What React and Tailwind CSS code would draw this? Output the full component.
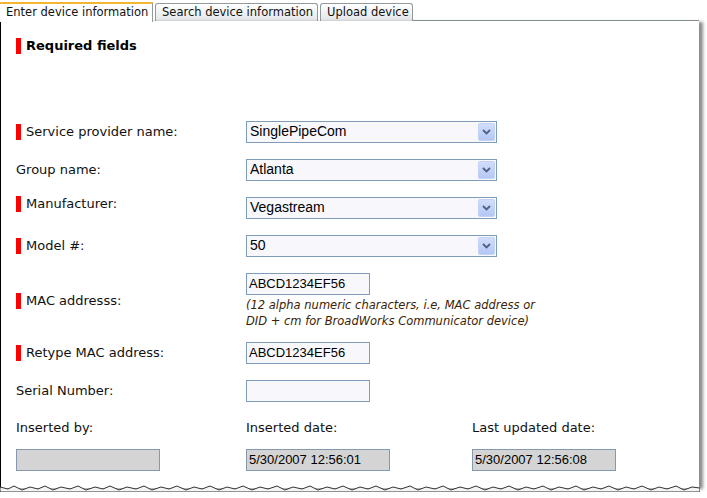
import React from "react"

const TABS = [
  { label: "Enter device information", active: true, w: "w-[153px]" },
  { label: "Search device information", active: false, w: "w-[163px]" },
  { label: "Upload device", active: false, w: "w-[93px]" },
]

function RedBar() {
  return <span className="inline-block w-[5px] h-[16px] bg-[#ff0000] mr-[5px] shrink-0" />
}

function Select({ value }) {
  return (
    <div className="w-[251px] h-[22px] border border-[#7f9db9] bg-[#f7f7fc] flex items-center justify-between pl-[3px] pr-[1px]">
      <span className="text-[14px] text-black" style={{ fontFamily: '"Liberation Sans", Arial, sans-serif' }}>{value}</span>
      <span className="w-[17px] h-[18px] rounded-[2px] bg-gradient-to-b from-[#d2ddfb] to-[#b4c7f5] border border-[#c3d2f7] flex items-center justify-center">
        <svg width="9" height="6" viewBox="0 0 9 6">
          <path d="M1 1 L4.5 4.5 L8 1" fill="none" stroke="#4d6185" strokeWidth="1.8" />
        </svg>
      </span>
    </div>
  )
}

function TextBox({ value = "", gray = false, w = "w-[124px]" }) {
  return (
    <div
      className={`${w} h-[22px] border ${gray ? "bg-[#d4d4d4] border-[#8499b0]" : "bg-[#f8f8fc] border-[#7f9db9]"} flex items-center pl-[2px] text-[13px] text-black`}
      style={{ fontFamily: '"Liberation Sans", Arial, sans-serif' }}
    >
      {value}
    </div>
  )
}

function Row({ label, required, children, className = "", labelClass = "" }) {
  return (
    <div className={`flex items-center ${className}`}>
      <div className={`w-[230px] flex items-center text-[13px] text-[#111] ${labelClass}`}>
        {required && <RedBar />}
        <span>{label}</span>
      </div>
      {children}
    </div>
  )
}

export default function App() {
  return (
    <div className="w-[707px] h-[498px] bg-white relative overflow-hidden" style={{ fontFamily: '"DejaVu Sans", Verdana, sans-serif' }}>
      {/* Tabs */}
      <div className="flex items-end h-[21px] w-[699px]">
        {TABS.map((t, i) =>
          t.active ? (
            <div key={i} className={`${t.w} h-[20px] border-t-2 border-[#f2b630] border-r border-r-[#919b9c] bg-white text-[11.5px] text-[#111] pl-[6px] leading-[17px] whitespace-nowrap -mb-px relative z-10`}>
              {t.label}
            </div>
          ) : (
            <div key={i} className={`${t.w} ml-[2px] h-[18px] border border-b-0 border-[#919b9c] rounded-t-[3px] bg-gradient-to-b from-white to-[#e3e5e8] text-[11.5px] text-[#111] pl-[6px] leading-[17px] whitespace-nowrap`}>
              {t.label}
            </div>
          )
        )}
        <div className="flex-1 border-b border-[#919b9c]" />
      </div>

      {/* Panel */}
      <div className="relative w-[699px] h-[467px] border-l border-black bg-white shadow-[4px_1px_3px_rgba(0,0,0,0.45)] pl-[15px]">
        <div className="flex items-center pt-[15px]">
          <RedBar />
          <span className="text-[13px] font-bold text-black">Required fields</span>
        </div>

        <div className="mt-[65px] flex flex-col">
          <Row label="Service provider name:" required>
            <Select value="SinglePipeCom" />
          </Row>
          <Row label="Group name:" className="mt-[16px]">
            <Select value="Atlanta" />
          </Row>
          <Row label="Manufacturer:" required className="mt-[16px]" labelClass="-mt-[7px]">
            <Select value="Vegastream" />
          </Row>
          <Row label="Model #:" required className="mt-[16px]">
            <Select value="50" />
          </Row>
          <Row label="MAC addresss:" required className="mt-[16px]">
            <div className="flex flex-col">
              <TextBox value="ABCD1234EF56" />
              <div className="mt-[2px] text-[11.5px] italic leading-[16px] text-[#3a2306]">
                (12 alpha numeric characters, i.e, MAC address or
                <br />
                DID + cm for BroadWorks Communicator device)
              </div>
            </div>
          </Row>
          <Row label="Retype MAC address:" required className="mt-[13px]">
            <TextBox value="ABCD1234EF56" />
          </Row>
          <Row label="Serial Number:" className="mt-[16px]">
            <TextBox />
          </Row>

          <div className="grid grid-cols-[230px_226px_200px] mt-[16px] text-[13px] text-[#111]">
            <div>Inserted by:</div>
            <div>Inserted date:</div>
            <div>Last updated date:</div>
            <div className="mt-[12px]"><TextBox gray w="w-[144px]" /></div>
            <div className="mt-[12px]"><TextBox gray w="w-[144px]" value="5/30/2007 12:56:01" /></div>
            <div className="mt-[12px]"><TextBox gray w="w-[144px]" value="5/30/2007 12:56:08" /></div>
          </div>
        </div>

        {/* torn bottom edge */}
        <svg className="absolute left-[-1px] bottom-[-4px]" width="700" height="8" viewBox="0 0 700 8">
          <path
            d="M0 3 L8 5 L14 2 L22 6 L30 3 L38 5 L45 2 L53 6 L61 3 L70 5 L78 2 L86 6 L95 3 L103 5 L110 2 L119 6 L127 3 L136 5 L144 2 L152 6 L161 3 L169 5 L177 2 L186 6 L194 3 L202 5 L210 2 L219 6 L227 3 L235 5 L243 2 L252 6 L260 3 L268 5 L277 2 L285 6 L293 3 L302 5 L310 2 L318 6 L327 3 L335 5 L343 2 L352 6 L360 3 L368 5 L376 2 L385 6 L393 3 L401 5 L410 2 L418 6 L426 3 L435 5 L443 2 L451 6 L460 3 L468 5 L476 2 L485 6 L493 3 L501 5 L509 2 L518 6 L526 3 L534 5 L543 2 L551 6 L559 3 L568 5 L576 2 L584 6 L593 3 L601 5 L609 2 L618 6 L626 3 L634 5 L642 2 L651 6 L659 3 L667 5 L676 2 L684 6 L692 3 L700 4 L700 8 L0 8 Z"
            fill="#f4f4f4"
            stroke="#333"
            strokeWidth="1"
          />
        </svg>
      </div>
    </div>
  )
}
